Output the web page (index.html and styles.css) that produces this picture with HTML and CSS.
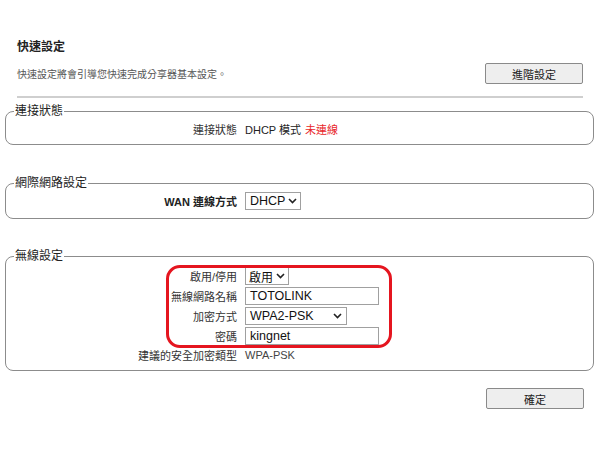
FILE: index.html
```html
<!DOCTYPE html>
<html lang="zh-Hant">
<head>
    <meta charset="UTF-8">
    <title>快速設定</title>
    <link rel="stylesheet" href="styles.css">
</head>
<body>
    <div class="page">
        <div class="header">
            <h1>快速設定</h1>
            <div class="intro">
                <span>快速設定將會引導您快速完成分享器基本設定。</span>
                <button class="btn">進階設定</button>
            </div>
            <hr>
        </div>

        <fieldset class="box box-status">
            <legend>連接狀態</legend>
            <div class="row">
                <div class="label">連接狀態</div>
                <div class="value">DHCP 模式 <span class="offline">未連線</span></div>
            </div>
        </fieldset>

        <fieldset class="box box-wan">
            <legend>網際網路設定</legend>
            <div class="row">
                <div class="label strong">WAN 連線方式</div>
                <div class="value">
                    <div class="select sel-wan"><span>DHCP</span>
                        <svg width="9" height="6" viewBox="0 0 9 6"><path d="M1 1l3.5 3.5L8 1" fill="none" stroke="#222" stroke-width="1.6"/></svg>
                    </div>
                </div>
            </div>
        </fieldset>

        <fieldset class="box box-wifi">
            <legend>無線設定</legend>
            <div class="highlight"></div>
            <div class="row">
                <div class="label">啟用/停用</div>
                <div class="value">
                    <div class="select sel-on"><span>啟用</span>
                        <svg width="9" height="6" viewBox="0 0 9 6"><path d="M1 1l3.5 3.5L8 1" fill="none" stroke="#222" stroke-width="1.6"/></svg>
                    </div>
                </div>
            </div>
            <div class="row">
                <div class="label">無線網路名稱</div>
                <div class="value"><div class="input">TOTOLINK</div></div>
            </div>
            <div class="row">
                <div class="label">加密方式</div>
                <div class="value">
                    <div class="select sel-enc"><span>WPA2-PSK</span>
                        <svg width="9" height="6" viewBox="0 0 9 6"><path d="M1 1l3.5 3.5L8 1" fill="none" stroke="#222" stroke-width="1.6"/></svg>
                    </div>
                </div>
            </div>
            <div class="row">
                <div class="label">密碼</div>
                <div class="value"><div class="input">kingnet</div></div>
            </div>
            <div class="row row-last">
                <div class="label">建議的安全加密類型</div>
                <div class="value muted">WPA-PSK</div>
            </div>
        </fieldset>

        <div class="footer">
            <button class="btn">確定</button>
        </div>
    </div>
</body>
</html>
```

FILE: styles.css
```css
body {
    margin: 0;
    background: #fff;
    color: #222;
    font-family: "Liberation Sans", Arial, "Noto Sans CJK TC", sans-serif;
    font-size: 11px;
}
.page {
    width: 599px;
}
.header {
    padding: 39px 16px 0 17px;
}
h1 {
    margin: 0;
    font-size: 12px;
    font-weight: bold;
    line-height: 16px;
}
.intro {
    display: flex;
    justify-content: space-between;
    align-items: center;
    margin-top: 8px;
    color: #555;
    font-size: 10px;
}
.btn {
    width: 98px;
    height: 21px;
    padding: 0;
    border: 1px solid #8a8a8a;
    border-radius: 2px;
    background: #eeeeee;
    color: #222;
    font-family: inherit;
    font-size: 11px;
}
hr {
    margin: 12px 0 0;
    border: none;
    border-top: 2px solid #cfcfcf;
}
.box {
    position: relative;
    margin: 0 5px;
    padding: 0 0 5px;
    border: 1.5px solid #8c8c8c;
    border-radius: 8px;
}
.box legend {
    margin-left: 8px;
    padding: 0 1px;
    font-size: 12px;
    line-height: 16px;
}
.box-status {
    margin-top: 5px;
}
.box-wan {
    margin-top: 30px;
    padding-bottom: 7px;
}
.box-wifi {
    margin-top: 29px;
    padding-top: 2px;
    padding-bottom: 7px;
}
.row {
    display: flex;
    align-items: center;
    height: 20px;
}
.row-last {
    height: 17px;
}
.label {
    width: 231px;
    text-align: right;
    padding-right: 8px;
    white-space: nowrap;
    color: #333;
}
.strong {
    font-weight: bold;
    color: #222;
}
.value {
    display: flex;
    align-items: center;
    gap: 4px;
    white-space: nowrap;
}
.muted {
    color: #444;
}
.offline {
    color: #e8262a;
}
.select,
.input {
    box-sizing: border-box;
    display: flex;
    align-items: center;
    height: 18px;
    padding: 0 4px;
    border: 1px solid #a0a0a0;
    background: #fff;
    font-size: 12.5px;
    color: #111;
    white-space: nowrap;
}
.select {
    justify-content: space-between;
    gap: 3px;
}
.select svg {
    flex-shrink: 0;
}
.sel-wan {
    width: 56px;
}
.sel-on {
    width: 44px;
    padding: 0 4px 0 3px;
    font-size: 12px;
}
.sel-enc {
    width: 102px;
}
.input {
    width: 134px;
}
.highlight {
    position: absolute;
    left: 160px;
    top: 1px;
    width: 220px;
    height: 77px;
    border: 3px solid #e5151f;
    border-radius: 14px;
    pointer-events: none;
}
.footer {
    display: flex;
    justify-content: flex-end;
    padding: 17px 15px 0 0;
}
```
